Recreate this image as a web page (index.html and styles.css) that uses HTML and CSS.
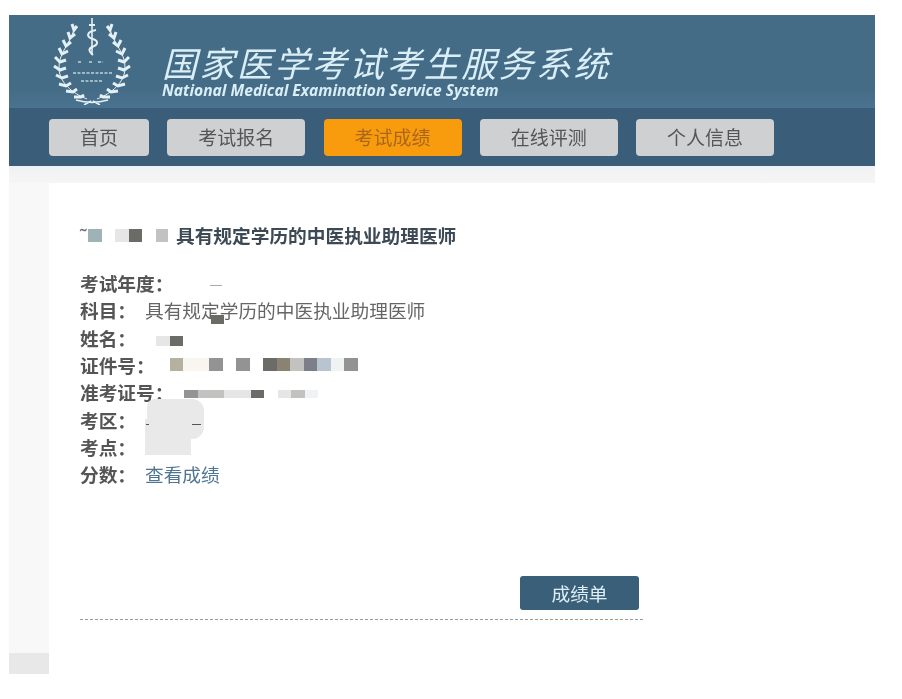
FILE: index.html

```html
<!DOCTYPE html>
<html lang="zh-CN">
<head>
    <meta charset="UTF-8">
    <meta name="viewport" content="width=device-width, initial-scale=1.0">
    <title>国家医学考试考生服务系统</title>
    <link rel="stylesheet" href="styles.css">
</head>
<body>
    <div class="page">
        <header class="banner">
            <svg class="logo" viewBox="0 0 100 90" aria-hidden="true">
                <g id="wreath">
                    <path class="stem" d="M34,14 C31,28 18,38 19,54 C20,68 32,78 47,84"/>
                    <path class="leaves" d="M32,9 L34,15 L37,11 M28,17 L30,23 L35,19 M23,25 L26,31 L31,27 M19,33 L22,39 L28,36 M15,42 L20,47 L26,45 M14,51 L20,55 L26,53 M16,60 L22,63 L28,61 M19,69 L26,71 L31,68 M26,76 L33,77 L37,74 M34,82 L41,82 L44,80"/>
                </g>
                <use href="#wreath" transform="matrix(-1 0 0 1 104 0)"/>
                <path class="staff" d="M52,3 L52,40"/>
                <path class="snake" d="M49,10 L55,10 M56,15 C46,17 46,22 53,24 C59,26 58,30 52,32 C48,34 49,37 53,40"/>
                <path class="ribbon" d="M36,85 C46,88 58,88 68,85 M44,90 L51,86 M60,90 L53,86"/>
                <path class="speckle" d="M38,47 L42,47 M49,47 L52,47 M58,47 L63,47"/>
                <path class="speckle" d="M33,58 L72,58 M41,66 L63,66"/>
            </svg>
            <div class="brand">
                <div class="brand-cn">国家医学考试考生服务系统</div>
                <div class="brand-en">National Medical Examination Service System</div>
            </div>
        </header>

        <nav class="nav">
            <a class="tab tab-short">首页</a>
            <a class="tab">考试报名</a>
            <a class="tab active">考试成绩</a>
            <a class="tab">在线评测</a>
            <a class="tab">个人信息</a>
        </nav>

        <div class="strip"></div>

        <div class="body-row">
            <aside class="side">
                <div class="side-foot"></div>
            </aside>

            <main class="content">
                <h3 class="exam-title">
                    <span class="mosaic title-mosaic">
                        <span class="tilde">˜</span><i class="m w14 teal"></i><i class="m w14 blank"></i><i class="m w14 pale"></i><i class="m w14 dark"></i><i class="m w14 blank"></i><i class="m w12 mid"></i>
                    </span>
                    具有规定学历的中医执业助理医师
                </h3>

                <div class="info">
                    <div class="row"><span class="label">考试年度：</span><span class="smudge"></span></div>
                    <div class="row"><span class="label">科目：</span><span class="value">具有规定学历的中医执业助理医师</span><span class="speck"></span></div>
                    <div class="row"><span class="label">姓名：</span><span class="mosaic name-mosaic"><i class="m w14 pale"></i><i class="m w14 dark"></i></span></div>
                    <div class="row"><span class="label">证件号：</span>
                        <span class="mosaic id-mosaic">
                            <i class="m w14 sand"></i><i class="m w26 cream"></i><i class="m w14 grey"></i><i class="m w14 blank"></i><i class="m w14 grey"></i><i class="m w14 blank"></i><i class="m w14 dark"></i><i class="m w14 olive"></i><i class="m w14 mid"></i><i class="m w14 slate"></i><i class="m w14 sky"></i><i class="m w14 ice"></i><i class="m w14 grey"></i>
                        </span>
                    </div>
                    <div class="row"><span class="label">准考证号：</span>
                        <span class="mosaic ticket-mosaic">
                            <i class="m w14 grey"></i><i class="m w26 mid"></i><i class="m w14 pale"></i><i class="m w14 pale"></i><i class="m w14 dark"></i><i class="m w14 blank"></i><i class="m w14 pale"></i><i class="m w14 mid"></i><i class="m w14 ice"></i>
                        </span>
                    </div>
                    <div class="row"><span class="label">考区：</span></div>
                    <div class="row"><span class="label">考点：</span></div>
                    <div class="row"><span class="label">分数：</span><a class="value link">查看成绩</a></div>
                    <div class="blot">
                        <span class="tick tick-left"></span>
                        <span class="tick tick-right"></span>
                    </div>
                </div>

                <div class="actions">
                    <a class="btn">成绩单</a>
                </div>
            </main>
        </div>
    </div>
</body>
</html>
```

FILE: styles.css

```css
body {
    margin: 0;
    background-color: #fff;
    font-family: "Noto Sans CJK SC", "Liberation Sans", sans-serif;
}
.page {
    width: 866px;
    height: 659px;
    margin: 15px 0 0 9px;
    display: flex;
    flex-direction: column;
    filter: blur(0.6px);
}

/* header */
.banner {
    height: 93px;
    flex: none;
    display: flex;
    align-items: flex-start;
    background: linear-gradient(#456c87 0, #456c87 80%, #4a7391 100%);
}
.logo {
    width: 100px;
    height: 90px;
    margin-left: 31px;
    flex: none;
}
.stem, .leaves, .staff, .snake, .ribbon, .speckle {
    fill: none;
    stroke: #e4f0f4;
}
.stem { stroke-width: 1; }
.leaves { stroke-width: 3; }
.staff { stroke-width: 1.6; }
.snake { stroke-width: 2; }
.ribbon { stroke-width: 1.6; }
.speckle {
    stroke: #9dbac9;
    stroke-width: 2;
    stroke-dasharray: 3 1.5;
}
.brand {
    margin: 26px 0 0 22px;
    color: #d9eef6;
}
.brand-cn {
    font-size: 35px;
    line-height: 42px;
    letter-spacing: 2.4px;
    font-style: italic;
    white-space: nowrap;
}
.brand-en {
    font-family: "Open Sans", "Liberation Sans", sans-serif;
    font-size: 15.6px;
    line-height: 14px;
    font-weight: bold;
    font-style: italic;
    white-space: nowrap;
}

/* nav */
.nav {
    height: 58px;
    flex: none;
    box-sizing: border-box;
    padding: 11px 0 0 40px;
    display: flex;
    gap: 18.25px;
    background-color: #3a5d79;
}
.tab {
    width: 138px;
    height: 37px;
    border-radius: 4px;
    background-color: #cfd0d1;
    color: #555;
    font-size: 19px;
    line-height: 36px;
    text-align: center;
}
.tab-short { width: 100px; }
.tab.active {
    background-color: #f89c0e;
    color: #a9661c;
}

.strip {
    height: 17px;
    flex: none;
    background: linear-gradient(#edf2f8 0, #f3f3f3 40%, #f5f5f5 100%);
}

.body-row {
    flex: 1;
    display: flex;
    min-height: 0;
}
.side {
    width: 40px;
    flex: none;
    display: flex;
    flex-direction: column;
    justify-content: flex-end;
    background-color: #f8f8f8;
}
.side-foot {
    height: 21px;
    background-color: #e8e8e8;
}

/* content */
.content {
    flex: 1;
    padding: 39px 0 0 31px;
    background-color: #fff;
}
.exam-title {
    margin: 0;
    display: flex;
    align-items: center;
    font-size: 18.7px;
    line-height: 26px;
    font-weight: bold;
    color: #3d4a55;
}
.mosaic {
    display: inline-flex;
    flex: none;
}
.title-mosaic {
    width: 96px;
    align-items: center;
}
.tilde {
    width: 8px;
    height: 13px;
    font-size: 20px;
    line-height: 12px;
    font-weight: normal;
    color: #667;
}
.m {
    display: block;
    height: 13px;
}
.w12 { width: 12px; }
.w14 { width: 13.5px; }
.w26 { width: 26px; }
.blank { background-color: #fff; }
.teal { background-color: #9fb2b6; }
.pale { background-color: #e6e6e6; }
.dark { background-color: #6b6b68; }
.mid { background-color: #c2c3c0; }
.sand { background-color: #b5b0a0; }
.cream { background-color: #f8f6ee; }
.grey { background-color: #939393; }
.olive { background-color: #8a8272; }
.slate { background-color: #7c7f88; }
.sky { background-color: #b8c4d0; }
.ice { background-color: #f0f3f3; }

.info {
    position: relative;
    margin-top: 21px;
}
.row {
    height: 27.3px;
    display: flex;
    align-items: center;
    font-size: 18.7px;
    color: #555;
    position: relative;
}
.label {
    flex: none;
    min-width: 65px;
    font-weight: bold;
}
.value {
    color: #666;
}
.link { color: #4f7590; }
.smudge {
    width: 12px;
    height: 1px;
    margin: 6px 0 0 37px;
    background-color: #aaa;
}
.speck {
    position: absolute;
    left: 131px;
    top: 19px;
    width: 13px;
    height: 9px;
    background-color: #6a6a66;
}
.name-mosaic {
    margin: 7px 0 0 11px;
}
.name-mosaic .m { height: 10px; }
.id-mosaic { margin-left: 15px; }
.ticket-mosaic { margin: 4px 0 0 11px; }
.ticket-mosaic .m { height: 8px; }

/* smudge painted over the exam area and site values */
.blot {
    position: absolute;
    left: 67px;
    top: 130px;
    width: 57px;
    height: 40px;
    border-radius: 8px 12px 12px 4px;
    background-color: #e9e9ea;
}
.blot::after {
    content: "";
    position: absolute;
    left: -2px;
    top: 20px;
    width: 46px;
    height: 36px;
    background-color: #e9e9ea;
}
.tick {
    position: absolute;
    top: 25px;
    height: 1px;
    background-color: #555;
    z-index: 1;
}
.tick-left {
    left: -1px;
    width: 3px;
}
.tick-right {
    left: 45px;
    width: 9px;
}
.actions {
    width: 563px;
    height: 44px;
    margin-top: 89px;
    box-sizing: border-box;
    padding-right: 4px;
    display: flex;
    justify-content: flex-end;
    align-items: flex-start;
    border-bottom: 1px dashed #999;
}
.btn {
    width: 119px;
    height: 34px;
    border-radius: 3px;
    background-color: #3a5f78;
    color: #dfeef4;
    font-size: 18.7px;
    line-height: 33px;
    text-align: center;
}
```
